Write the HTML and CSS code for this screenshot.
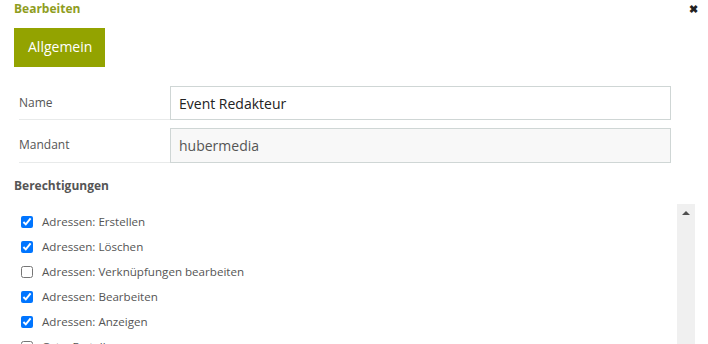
FILE: index.html
```html
<!DOCTYPE html>
<html lang="de">
<head>
<meta charset="utf-8">
<link rel="stylesheet" href="styles.css">
</head>
<body>
<div class="dialog">
  <div class="header">
    <span class="title">Bearbeiten</span>
    <span class="close">✖</span>
  </div>
  <div class="tabs"><span class="tab">Allgemein</span></div>
  <div class="form">
    <div class="row">
      <label class="label">Name</label>
      <div class="input">Event Redakteur</div>
    </div>
    <div class="row">
      <label class="label">Mandant</label>
      <div class="input readonly">hubermedia</div>
    </div>
  </div>
  <div class="section">Berechtigungen</div>
  <div class="listbox">
    <ul class="list">
      <li><input type="checkbox" checked><span>Adressen: Erstellen</span></li>
      <li><input type="checkbox" checked><span>Adressen: Löschen</span></li>
      <li><input type="checkbox"><span>Adressen: Verknüpfungen bearbeiten</span></li>
      <li><input type="checkbox" checked><span>Adressen: Bearbeiten</span></li>
      <li><input type="checkbox" checked><span>Adressen: Anzeigen</span></li>
      <li><input type="checkbox"><span>Orte: Erstellen</span></li>
    </ul>
    <div class="scrollbar"><span class="arrow"></span></div>
  </div>
</div>
</body>
</html>
```

FILE: styles.css
```css
html, body {
  margin: 0;
  padding: 0;
  background: #fff;
  height: 344px;
  overflow: hidden;
}
body {
  font-family: "Open Sans", "Noto Sans", sans-serif;
  color: #555;
}
.dialog {
  padding: 0 13px 0 14px;
}
.header {
  display: flex;
  justify-content: space-between;
  align-items: center;
  height: 18px;
}
.title {
  font-size: 12px;
  font-weight: 700;
  color: #8f9d1e;
  line-height: 18px;
}
.close {
  font-size: 11px;
  color: #222;
  font-weight: 700;
  margin-right: -3px;
  line-height: 18px;
}
.tabs {
  display: flex;
  margin-top: 10px;
}
.tab {
  display: block;
  background: #93a300;
  color: #fff;
  font-size: 14px;
  height: 39px;
  line-height: 38px;
  padding: 0 13px 0 14px;
}
.form {
  margin: 19px 0 0 5px;
  width: 652px;
  display: flex;
  flex-direction: column;
  gap: 8px;
}
.row {
  display: flex;
  align-items: stretch;
}
.label {
  width: 151px;
  font-size: 12px;
  color: #555;
  border-bottom: 1px solid #e8eaea;
  display: flex;
  align-items: center;
  padding-bottom: 1px;
}
.input {
  flex: 1;
  height: 32px;
  border: 1px solid #cfd6d5;
  font-size: 14px;
  color: #222;
  display: flex;
  align-items: center;
  padding: 0 8px;
}
.input.readonly {
  background: #f8f8f8;
  color: #555;
  height: 33px;
}
.section {
  font-size: 12px;
  font-weight: 700;
  color: #555;
  margin-top: 14px;
  line-height: 17px;
}
.listbox {
  margin-top: 10px;
  display: flex;
  height: 200px;
}
.list {
  list-style: none;
  margin: 0;
  padding: 5px 0 0 0;
  flex: 1;
}
.list li {
  display: flex;
  align-items: center;
  height: 25px;
  font-size: 11.6px;
  color: #555;
}
.list input {
  width: 12px;
  height: 12px;
  margin: 0 9px 0 7px;
}
.scrollbar {
  width: 18px;
  background: #f0f0f0;
  display: flex;
  justify-content: center;
  padding-top: 7px;
  box-sizing: border-box;
}
.arrow {
  width: 0;
  height: 0;
  border-left: 4px solid transparent;
  border-right: 4px solid transparent;
  border-bottom: 4px solid #505050;
}
```
